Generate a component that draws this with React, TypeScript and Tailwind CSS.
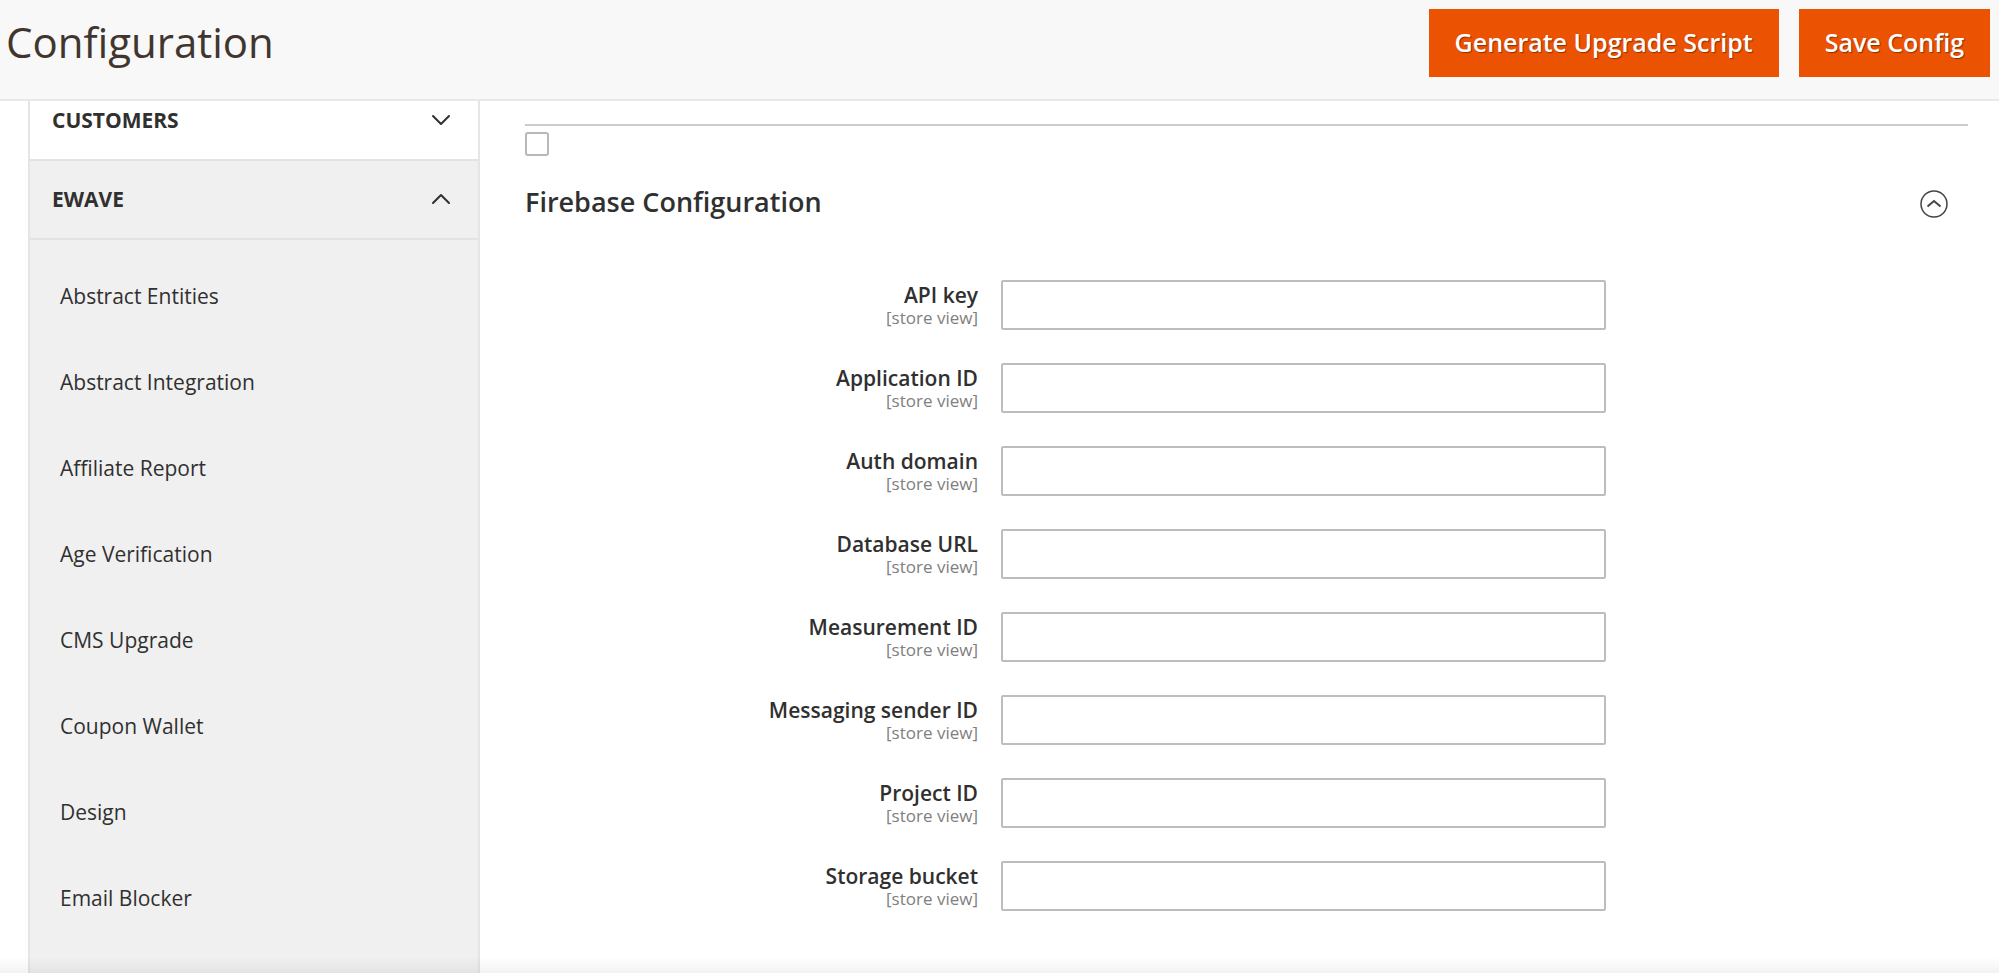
import { useState } from "react";

const fields = [
  { id: "api-key", label: "API key" },
  { id: "application-id", label: "Application ID" },
  { id: "auth-domain", label: "Auth domain" },
  { id: "database-url", label: "Database URL" },
  { id: "measurement-id", label: "Measurement ID" },
  { id: "messaging-sender-id", label: "Messaging sender ID" },
  { id: "project-id", label: "Project ID" },
  { id: "storage-bucket", label: "Storage bucket" },
];

const links = [
  "Abstract Entities",
  "Abstract Integration",
  "Affiliate Report",
  "Age Verification",
  "CMS Upgrade",
  "Coupon Wallet",
  "Design",
  "Email Blocker",
];

function Chevron({ up = false }: { up?: boolean }) {
  return (
    <svg
      width="20"
      height="12"
      viewBox="0 0 20 12"
      fill="none"
      stroke="#303030"
      strokeWidth="2"
      strokeLinecap="round"
      strokeLinejoin="round"
      aria-hidden="true"
    >
      <path d={up ? "M2 10 10 2l8 8" : "M2 2l8 8 8-8"} />
    </svg>
  );
}

function HeaderButton({ children }: { children: string }) {
  return (
    <button
      type="button"
      className="h-17 bg-[#eb5202] px-[26px] pb-[2px] text-[25px] leading-8 font-semibold text-white [text-shadow:1px_1px_1px_rgba(0,0,0,0.4)]"
    >
      {children}
    </button>
  );
}

function SectionToggle({ label, open }: { label: string; open: boolean }) {
  return (
    <button
      type="button"
      aria-expanded={open}
      className="flex w-full items-center justify-between pr-[27px] pl-[22px] text-[21px] leading-7 font-bold uppercase"
    >
      {label}
      <Chevron up={open} />
    </button>
  );
}

export default function App() {
  const [values, setValues] = useState<Record<string, string>>({});

  return (
    <div className="flex min-h-screen flex-col bg-white font-['Open_Sans','Noto_Sans',sans-serif] text-[#303030]">
      <header className="flex h-[101px] items-start justify-between border-b-2 border-[#e8e8e8] bg-[#f8f8f8] pt-[9px] pr-[9px] pl-[6px]">
        <h1 className="text-[42px] leading-[66px] text-[#41362f]">Configuration</h1>
        <div className="flex gap-5">
          <HeaderButton>Generate Upgrade Script</HeaderButton>
          <HeaderButton>Save Config</HeaderButton>
        </div>
      </header>

      <div className="flex flex-1">
        <nav aria-label="Configuration sections" className="ml-7 flex w-[452px] shrink-0 flex-col border-x-2 border-[#e5e5e5]">
          <div className="border-b-2 border-[#e3e3e3] pt-[5px] pb-[25px]">
            <SectionToggle label="Customers" open={false} />
          </div>
          <div className="border-b-2 border-[#e3e3e3] bg-[#f0f0f0] pt-6 pb-[25px]">
            <SectionToggle label="Ewave" open />
          </div>
          <ul className="flex-1 bg-[#f0f0f0] pt-[13px]">
            {links.map((name) => (
              <li key={name}>
                <a href="#" className="block py-[29px] pl-[30px] text-[21px] leading-7">
                  {name}
                </a>
              </li>
            ))}
          </ul>
        </nav>

        <main className="min-w-0 flex-1 pt-[23px] pr-[31px] pl-[45px]">
          <div className="border-t-2 border-[#cccccc] pt-[6px]">
            <input
              type="checkbox"
              aria-label="Use default"
              className="block size-6 appearance-none rounded-[3px] border-2 border-[#b8b8b8] bg-white checked:bg-[#b8b8b8]"
            />
          </div>

          <section>
            <div className="mt-7 flex items-center justify-between pr-5">
              <h2 className="text-[27px] leading-9 font-semibold">Firebase Configuration</h2>
              <button type="button" aria-label="Collapse Firebase Configuration" className="mt-1">
                <svg width="28" height="28" viewBox="0 0 28 28" fill="none" stroke="#444444" aria-hidden="true">
                  <circle cx="14" cy="14" r="13" strokeWidth="1.5" />
                  <path d="M7.5 16.5 14 11l6.5 5.5" strokeWidth="2" />
                </svg>
              </button>
            </div>

            <div className="mt-[60px] flex flex-col gap-[33px] pb-10">
              {fields.map(({ id, label }) => (
                <div key={id} className="grid grid-cols-[453fr_605fr_339fr] items-start gap-x-[23px]">
                  <label htmlFor={id} className="flex flex-col pt-[2px] text-right">
                    <span className="text-[21px] leading-[26px] font-semibold">{label}</span>
                    <span className="text-[17px] leading-5 text-[#808080]">[store view]</span>
                  </label>
                  <input
                    id={id}
                    type="text"
                    value={values[id] ?? ""}
                    onChange={(e) => setValues({ ...values, [id]: e.target.value })}
                    className="h-[50px] w-full rounded-[2px] border-2 border-[#bdbdbd] bg-white px-4 text-[21px]"
                  />
                </div>
              ))}
            </div>
          </section>
        </main>
      </div>
      <div className="pointer-events-none fixed inset-x-0 bottom-0 h-4 bg-linear-to-t from-black/5 to-transparent" />
    </div>
  );
}
